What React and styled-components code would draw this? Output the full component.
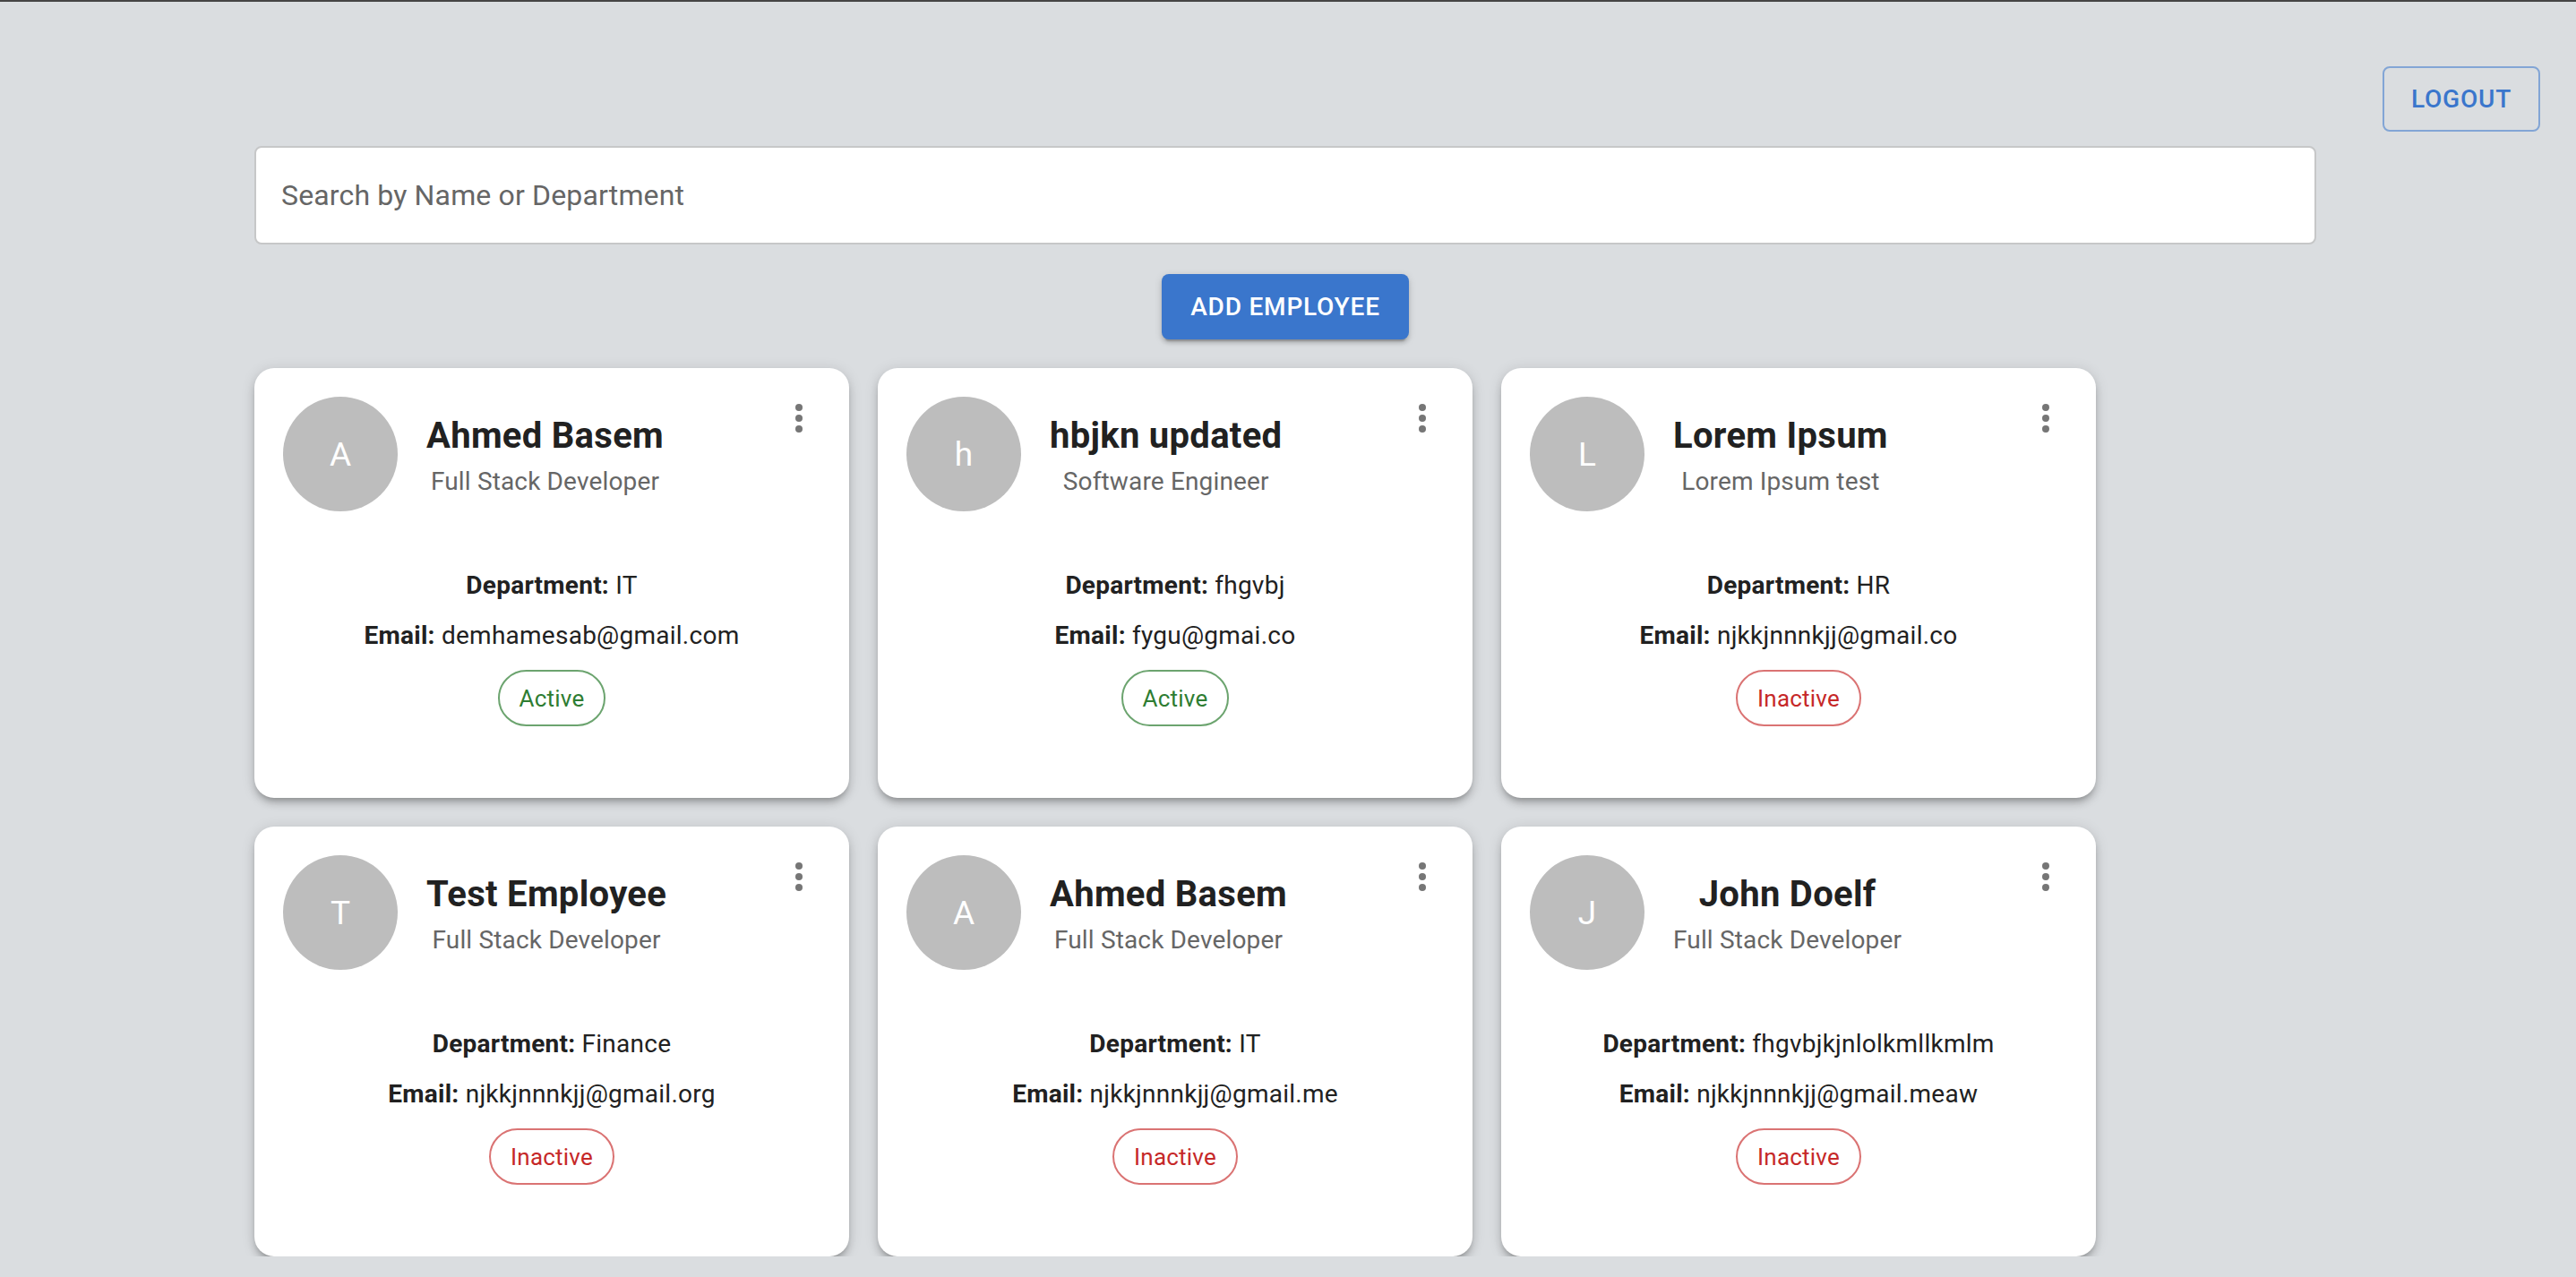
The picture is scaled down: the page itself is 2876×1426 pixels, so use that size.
import React from "react";
import styled, { createGlobalStyle, css } from "styled-components";

const GlobalStyle = createGlobalStyle`
  * {
    box-sizing: border-box;
  }
  body {
    margin: 0;
    background: #dadde0;
    border-top: 2px solid #454545;
    font-family: Roboto, "Liberation Sans", Arial, sans-serif;
    color: #212121;
  }
`;

const employees = [
  { id: 1, name: "Ahmed Basem", title: "Full Stack Developer", department: "IT", email: "demhamesab@gmail.com", active: true },
  { id: 2, name: "hbjkn updated", title: "Software Engineer", department: "fhgvbj", email: "fygu@gmai.co", active: true },
  { id: 3, name: "Lorem Ipsum", title: "Lorem Ipsum test", department: "HR", email: "njkkjnnnkjj@gmail.co", active: false },
  { id: 4, name: "Test Employee", title: "Full Stack Developer", department: "Finance", email: "njkkjnnnkjj@gmail.org", active: false },
  { id: 5, name: "Ahmed Basem", title: "Full Stack Developer", department: "IT", email: "njkkjnnnkjj@gmail.me", active: false },
  { id: 6, name: "John Doelf", title: "Full Stack Developer", department: "fhgvbjkjnlolkmllkmlm", email: "njkkjnnnkjj@gmail.meaw", active: false },
];

const Page = styled.div`
  padding-top: 72px;
`;

const TopBar = styled.div`
  display: flex;
  justify-content: flex-end;
  padding-right: 40px;
`;

const LogoutButton = styled.button`
  width: 176px;
  height: 73px;
  background: transparent;
  border: 2px solid rgba(58, 118, 204, 0.55);
  border-radius: 8px;
  color: #3a76cc;
  font-family: inherit;
  font-size: 28px;
  font-weight: 500;
  letter-spacing: 0.8px;
  text-transform: uppercase;
  cursor: pointer;
`;

const Container = styled.div`
  width: 2302px;
  margin: 16px 0 0 284px;
  display: flex;
  flex-direction: column;
  align-items: center;
`;

const SearchInput = styled.input`
  width: 100%;
  height: 110px;
  border: 2px solid #c6c7c8;
  border-radius: 8px;
  background: #ffffff;
  padding: 0 28px;
  font-family: inherit;
  font-size: 32px;
  letter-spacing: 0.15px;
  color: #212121;
  outline: none;

  &::placeholder {
    color: #666666;
    opacity: 1;
  }
`;

const AddButton = styled.button`
  margin-top: 33px;
  width: 276px;
  height: 73px;
  border: none;
  border-radius: 8px;
  background: #3a76cc;
  color: #ffffff;
  font-family: inherit;
  font-size: 28px;
  font-weight: 500;
  letter-spacing: 0.8px;
  text-transform: uppercase;
  box-shadow: 0 6px 2px -4px rgba(0, 0, 0, 0.2), 0 4px 4px 0 rgba(0, 0, 0, 0.14),
    0 2px 10px 0 rgba(0, 0, 0, 0.12);
  cursor: pointer;
`;

const CardGrid = styled.div`
  align-self: stretch;
  margin-top: 32px;
  display: flex;
  flex-wrap: wrap;
  gap: 32px;
`;

const Card = styled.div`
  position: relative;
  width: 664px;
  height: 480px;
  padding: 32px;
  background: #ffffff;
  border-radius: 22px;
  box-shadow: 0 6px 6px -4px rgba(0, 0, 0, 0.2), 0 6px 8px 0 rgba(0, 0, 0, 0.14),
    0 2px 16px 0 rgba(0, 0, 0, 0.12);
`;

const CardHeader = styled.div`
  display: flex;
  align-items: center;
  gap: 32px;
`;

const Avatar = styled.div`
  width: 128px;
  height: 128px;
  flex-shrink: 0;
  border-radius: 50%;
  background: #bdbdbd;
  color: #ffffff;
  font-size: 37px;
  display: flex;
  align-items: center;
  justify-content: center;
`;

const NameBlock = styled.div`
  text-align: center;
`;

const Name = styled.div`
  font-size: 40px;
  font-weight: 700;
  line-height: 62px;
  letter-spacing: 0.3px;
  color: #212121;
`;

const Role = styled.div`
  font-size: 28px;
  line-height: 40px;
  letter-spacing: 0.15px;
  color: #666666;
`;

const MenuButton = styled.button`
  position: absolute;
  top: 16px;
  right: 16px;
  width: 80px;
  height: 80px;
  border: none;
  background: transparent;
  border-radius: 50%;
  display: flex;
  align-items: center;
  justify-content: center;
  color: #767676;
  padding: 0;
  cursor: pointer;
`;

const CardBody = styled.div`
  margin-top: 63px;
  display: flex;
  flex-direction: column;
  align-items: center;
`;

const InfoLine = styled.div`
  font-size: 28px;
  line-height: 40px;
  letter-spacing: 0.25px;
  color: #212121;
  & + & {
    margin-top: 16px;
  }

  b {
    font-weight: 700;
  }
`;

const activeChip = css`
  color: #2e7d32;
  border-color: rgba(46, 125, 50, 0.7);
`;

const inactiveChip = css`
  color: #c62828;
  border-color: rgba(198, 40, 40, 0.65);
`;

const StatusChip = styled.div`
  margin-top: 18px;
  height: 63px;
  padding: 0 22px;
  display: inline-flex;
  align-items: center;
  border: 2px solid;
  border-radius: 32px;
  font-size: 26px;
  letter-spacing: 0.2px;
  ${(props) => (props.$active ? activeChip : inactiveChip)}
`;

const MoreVertIcon = () => (
  <svg width="48" height="48" viewBox="0 0 24 24" fill="currentColor">
    <circle cx="12" cy="6" r="2" />
    <circle cx="12" cy="12" r="2" />
    <circle cx="12" cy="18" r="2" />
  </svg>
);

const EmployeeCard = ({ name, title, department, email, active }) => (
  <Card>
    <CardHeader>
      <Avatar>{name.charAt(0)}</Avatar>
      <NameBlock>
        <Name>{name}</Name>
        <Role>{title}</Role>
      </NameBlock>
    </CardHeader>
    <MenuButton aria-label="more">
      <MoreVertIcon />
    </MenuButton>
    <CardBody>
      <InfoLine>
        <b>Department:</b> {department}
      </InfoLine>
      <InfoLine>
        <b>Email:</b> {email}
      </InfoLine>
      <StatusChip $active={active}>{active ? "Active" : "Inactive"}</StatusChip>
    </CardBody>
  </Card>
);

const App = () => {
  return (
    <>
      <GlobalStyle />
      <Page>
        <TopBar>
          <LogoutButton>Logout</LogoutButton>
        </TopBar>
        <Container>
          <SearchInput placeholder="Search by Name or Department" />
          <AddButton>Add Employee</AddButton>
          <CardGrid>
            {employees.map((emp) => (
              <EmployeeCard key={emp.id} {...emp} />
            ))}
          </CardGrid>
        </Container>
      </Page>
    </>
  );
};

export default App;
